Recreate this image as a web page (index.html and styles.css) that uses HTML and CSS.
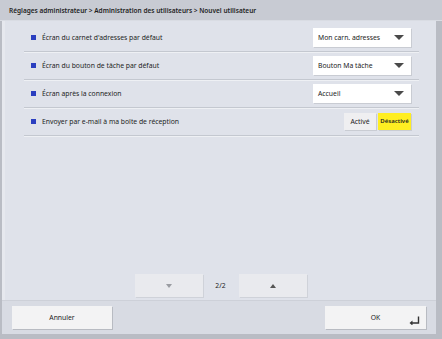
FILE: index.html
```html
<!DOCTYPE html>
<html>
<head>
<meta charset="utf-8">
<link rel="stylesheet" href="styles.css">
<title>Nouvel utilisateur</title>
</head>
<body>
<div class="screen">
  <div class="titlebar">Réglages administrateur &gt; Administration des utilisateurs &gt; Nouvel utilisateur</div>
  <div class="main">
    <div class="rows">
      <div class="row">
        <span class="label"><i class="mark"></i>Écran du carnet d'adresses par défaut</span>
        <span class="select">Mon carn. adresses<i class="arrow"></i></span>
      </div>
      <div class="row">
        <span class="label"><i class="mark"></i>Écran du bouton de tâche par défaut</span>
        <span class="select">Bouton Ma tâche<i class="arrow"></i></span>
      </div>
      <div class="row">
        <span class="label"><i class="mark"></i>Écran après la connexion</span>
        <span class="select">Accueil<i class="arrow"></i></span>
      </div>
      <div class="row">
        <span class="label"><i class="mark"></i>Envoyer par e-mail à ma boîte de réception</span>
        <span class="toggle">
          <span class="opt">Activé</span>
          <span class="opt on">Désactivé</span>
        </span>
      </div>
    </div>
    <div class="pager">
      <span class="pbtn"><i class="tri down"></i></span>
      <span class="count">2/2</span>
      <span class="pbtn"><i class="tri up"></i></span>
    </div>
  </div>
  <div class="footer">
    <span class="btn">Annuler</span>
    <span class="btn ok">OK
      <svg class="enter" width="11" height="9" viewBox="0 0 11 9"><path d="M9.5 0.5 V7 H2" fill="none" stroke="#333" stroke-width="1.4"/><path d="M0.5 7 L3.5 4.5 L3.5 9.5 Z" fill="#333"/></svg>
    </span>
  </div>
</div>
</body>
</html>
```

FILE: styles.css
```css
body {
    margin: 0;
    background: #b9bcc4;
    font-family: "Noto Sans", "Open Sans", sans-serif;
    color: #222;
}
.screen {
    width: 442px;
    height: 339px;
    display: flex;
    flex-direction: column;
}
.titlebar {
    height: 21px;
    line-height: 21px;
    background: #c8cbd3;
    padding-left: 9px;
    font-size: 6.5px;
    font-weight: 600;
    color: #1e1e1e;
    border-bottom: 1px solid #d9dce3;
    box-sizing: border-box;
}
.main {
    flex: 1;
    margin: 0 6px 0 2px;
    background: #dfe2ea;
    border-left: 3px solid #e6e8ee;
    display: flex;
    flex-direction: column;
    justify-content: space-between;
}
.rows {
    padding: 3px 17px 0 19px;
}
.row {
    height: 27px;
    display: flex;
    align-items: center;
    justify-content: space-between;
    border-bottom: 1px solid #c4c8d0;
    box-shadow: 0 1px 0 #eef0f4;
    padding: 0 8px 0 7px;
}
.label {
    font-size: 6.8px;
    display: flex;
    align-items: center;
}
.mark {
    display: inline-block;
    width: 5px;
    height: 5px;
    background: #2b3fc0;
    margin-right: 6px;
}
.select {
    width: 98px;
    height: 19px;
    box-sizing: border-box;
    background: #fff;
    box-shadow: 1px 1px 0 #c9ccd3;
    font-size: 6.8px;
    padding-left: 5px;
    display: flex;
    align-items: center;
    justify-content: space-between;
}
.arrow {
    width: 0;
    height: 0;
    border-left: 5px solid transparent;
    border-right: 5px solid transparent;
    border-top: 5px solid #4a4a4a;
    margin-right: 7px;
}
.toggle {
    display: flex;
    gap: 2px;
}
.opt {
    width: 32px;
    height: 17px;
    line-height: 17px;
    text-align: center;
    font-size: 6.8px;
    background: #efeff1;
    box-shadow: 1px 1px 0 #c9ccd3;
}
.opt.on {
    width: 33px;
    background: #ffee22;
    font-size: 6px;
    font-weight: 600;
}
.pager {
    display: flex;
    align-items: center;
    justify-content: center;
    margin-bottom: 3px;
}
.pbtn {
    width: 68px;
    height: 23px;
    background: #e9eaee;
    box-shadow: 1px 1px 0 #cfd2d9;
    display: flex;
    align-items: center;
    justify-content: center;
}
.count {
    width: 36px;
    text-align: center;
    font-size: 6.8px;
}
.tri {
    width: 0;
    height: 0;
    border-left: 3px solid transparent;
    border-right: 3px solid transparent;
}
.tri.down {
    border-top: 4px solid #9a9ca2;
}
.tri.up {
    border-bottom: 4px solid #555;
}
.footer {
    height: 34px;
    margin: 0 6px 5px 2px;
    background: #d8dbe3;
    border-top: 1px solid #cdd0d8;
    box-sizing: border-box;
    display: flex;
    align-items: center;
    justify-content: space-between;
    padding: 0 10px 0 10px;
}
.btn {
    width: 100px;
    height: 23px;
    background: #f3f3f4;
    box-shadow: 1px 1px 0 #b8bbc2;
    font-size: 6.8px;
    display: flex;
    align-items: center;
    justify-content: center;
    position: relative;
}
.btn.ok {
    width: 101px;
}
.enter {
    position: absolute;
    right: 6px;
    bottom: 4px;
}
```
